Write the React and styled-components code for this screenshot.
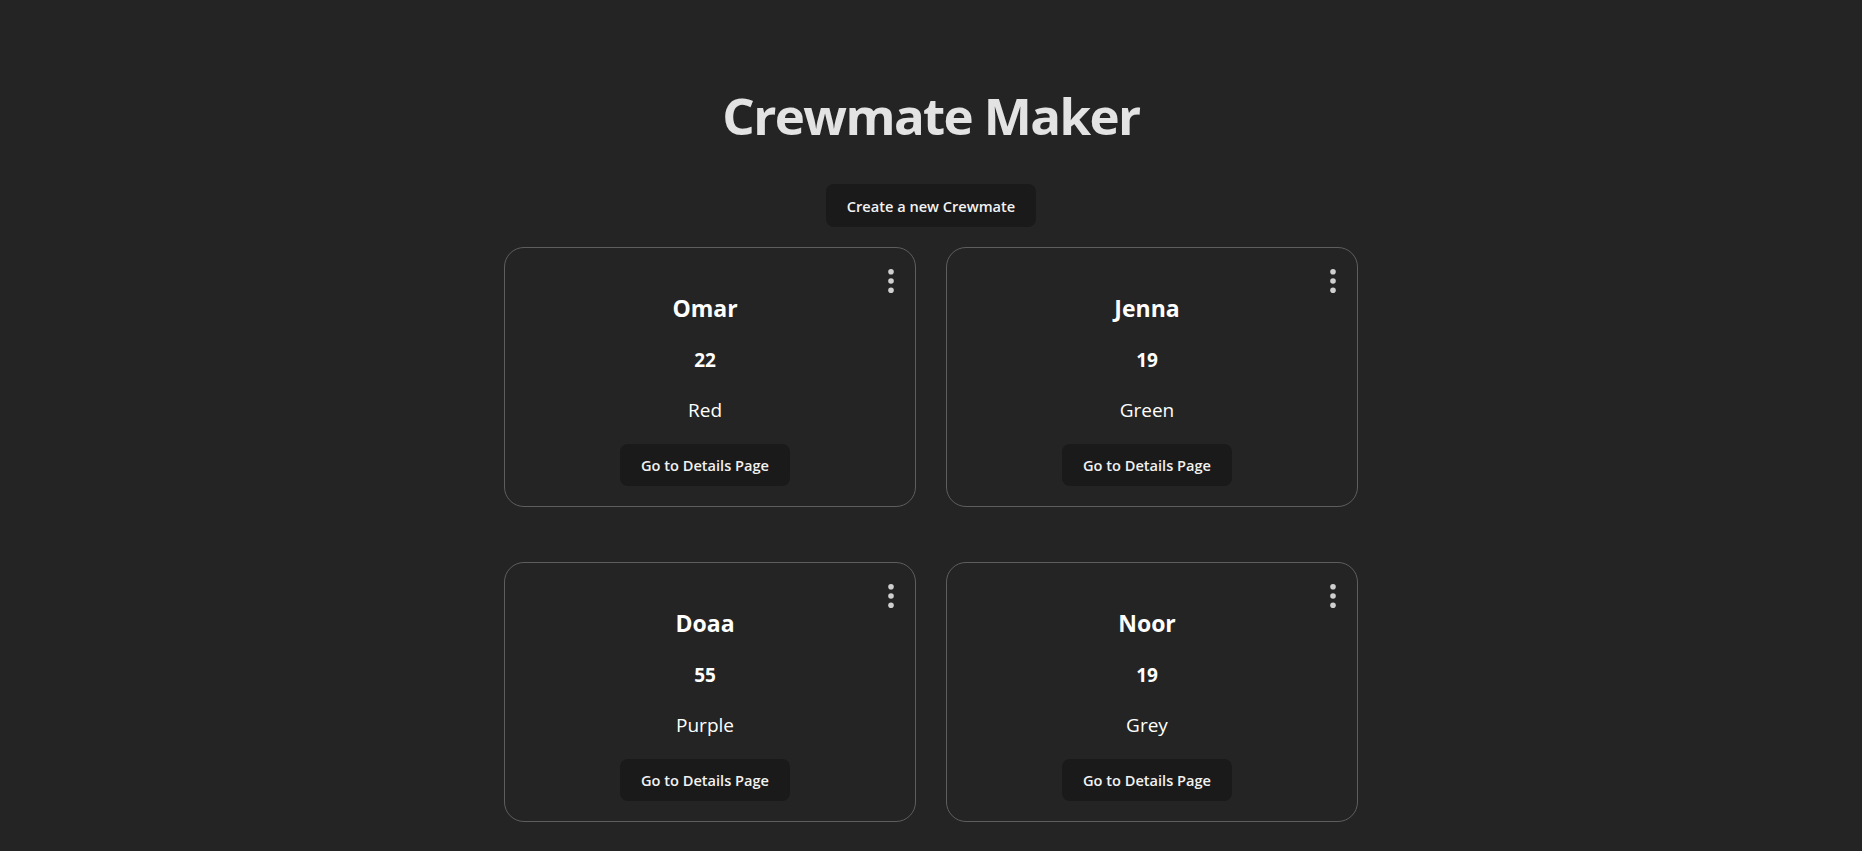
import React from "react";
import styled, { createGlobalStyle } from "styled-components";

const GlobalStyle = createGlobalStyle`
  html, body {
    margin: 0;
    background: #242424;
  }
  body {
    font-family: "Open Sans", "Noto Sans", sans-serif;
    color: rgba(255, 255, 255, 0.87);
  }
`;

const crewmates = [
  { id: 1, name: "Omar", age: 22, color: "Red" },
  { id: 2, name: "Jenna", age: 19, color: "Green" },
  { id: 3, name: "Doaa", age: 55, color: "Purple" },
  { id: 4, name: "Noor", age: 19, color: "Grey" },
];

const Page = styled.main`
  display: flex;
  flex-direction: column;
  align-items: center;
  padding: 87px 0 40px;
`;

const Title = styled.h1`
  margin: 0;
  font-size: 51px;
  line-height: 57px;
  font-weight: 700;
  color: #e3e3e3;
  letter-spacing: -1.6px;
`;

const DarkButton = styled.button`
  border: 1px solid transparent;
  border-radius: 8px;
  background: #1a1a1a;
  color: #f2f2f2;
  font-family: inherit;
  font-size: 14.6px;
  font-weight: 600;
  line-height: 20px;
  padding: 10px ${(p) => p.$px || 20}px;
  cursor: pointer;
`;

const CreateButton = styled(DarkButton)`
  margin-top: 40px;
  padding-top: 11px;
  padding-bottom: 10px;
`;

const Grid = styled.section`
  display: grid;
  grid-template-columns: repeat(2, 412px);
  column-gap: 30px;
  row-gap: 55px;
  margin-top: 20px;
`;

const Card = styled.article`
  position: relative;
  box-sizing: border-box;
  height: 260px;
  border: 1px solid #5e5e5e;
  border-radius: 20px;
  display: flex;
  flex-direction: column;
  align-items: center;
  padding: 44px 10px 0 0;
  color: #ffffff;
`;

const Kebab = styled.button`
  position: absolute;
  top: 20px;
  right: 14px;
  width: 20px;
  height: 26px;
  padding: 0;
  border: none;
  background: transparent;
  display: flex;
  align-items: center;
  justify-content: center;
  cursor: pointer;
`;

const Name = styled.h2`
  margin: 0;
  font-size: 23px;
  line-height: 32px;
  font-weight: 700;
`;

const Age = styled.h3`
  margin: 23px 0 0;
  font-size: 19px;
  line-height: 26px;
  font-weight: 700;
`;

const Color = styled.p`
  margin: 23px 0 0;
  font-size: 19px;
  line-height: 28px;
  font-weight: 400;
`;

const DetailsButton = styled(DarkButton)`
  margin-top: 20px;
`;

const Dots = () => (
  <svg width="8" height="26" viewBox="0 0 8 26">
    <circle cx="4" cy="3.8" r="2.8" fill="#cfcfcf" />
    <circle cx="4" cy="13" r="2.8" fill="#cfcfcf" />
    <circle cx="4" cy="22.2" r="2.8" fill="#cfcfcf" />
  </svg>
);

const CrewCard = ({ name, age, color }) => (
  <Card>
    <Kebab aria-label="More options">
      <Dots />
    </Kebab>
    <Name>{name}</Name>
    <Age>{age}</Age>
    <Color>{color}</Color>
    <DetailsButton>Go to Details Page</DetailsButton>
  </Card>
);

const App = () => {
  return (
    <>
      <GlobalStyle />
      <Page>
        <Title>Crewmate Maker</Title>
        <CreateButton>Create a new Crewmate</CreateButton>
        <Grid>
          {crewmates.map((c) => (
            <CrewCard key={c.id} {...c} />
          ))}
        </Grid>
      </Page>
    </>
  );
};

export default App;
